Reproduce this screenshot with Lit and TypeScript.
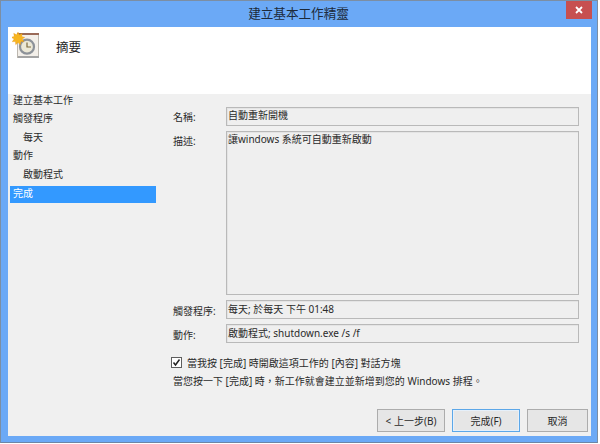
import { LitElement, html, css } from "lit";
import { customElement } from "lit/decorators.js";

@customElement("app-root")
export class AppRoot extends LitElement {
  static styles = css`
    :host {
      display: block;
      width: 600px;
      height: 444px;
      font-family: "Noto Sans", "Noto Sans CJK TC", sans-serif;
      font-size: 10px;
      color: #2a2a2a;
    }
    * { box-sizing: border-box; }
    .window {
      width: 598px;
      height: 443px;
      margin: 0 1px 1px 0;
      background: #6ba9f6;
      border: 1px solid #7c8ea3;
      border-bottom-color: #6c86a6;
      display: flex;
      flex-direction: column;
      padding: 0 6px 6px 7px;
    }
    .titlebar {
      height: 26px;
      flex: none;
      display: flex;
      align-items: flex-start;
      position: relative;
    }
    .title {
      flex: 1;
      text-align: center;
      font-size: 12.6px;
      line-height: 25px;
      color: #1c2a3a;
      padding-right: 2px;
    }
    .close {
      position: absolute;
      right: -1px;
      top: 0;
      width: 26px;
      height: 18px;
      background: #c75050;
      display: flex;
      align-items: center;
      justify-content: center;
    }
    .client {
      flex: 1;
      display: flex;
      flex-direction: column;
      background: #f0f0f0;
      min-height: 0;
    }
    .header {
      height: 67px;
      flex: none;
      background: #fff;
      display: flex;
      align-items: flex-start;
      padding: 5px 0 0 4px;
    }
    .header svg { flex: none; }
    .header h1 {
      margin: 7px 0 0 16px;
      font-size: 12.5px;
      line-height: 18px;
      font-weight: 400;
      color: #1e1e1e;
    }
    .body {
      flex: 1;
      display: flex;
      min-height: 0;
    }
    .nav {
      width: 146px;
      flex: none;
      margin-left: 2px;
      display: flex;
      flex-direction: column;
    }
    .nav div {
      height: 18.4px;
      line-height: 13px;
      padding-left: 3px;
    }
    .nav .sub { padding-left: 13px; }
    .nav .sel {
      background: #3399ff;
      color: #fff;
      height: 16.5px;
      margin-top: 0.5px;
      line-height: 14px;
    }
    .main {
      flex: 1;
      padding: 13px 12px 0 17px;
      display: flex;
      flex-direction: column;
      min-width: 0;
    }
    .form {
      display: grid;
      grid-template-columns: 53px 1fr;
      row-gap: 5px;
      grid-template-rows: 19px 164px 19px 19px;
    }
    .lbl { padding-top: 2px; line-height: 16px; }
    .lbl.mid { padding-top: 3px; }
    .field {
      border: 1px solid #b9b9b9;
      background: #efefef;
      padding: 0 4px 0 1px;
      line-height: 15px;
      white-space: nowrap;
      overflow: hidden;
      box-shadow: inset 1px 1px 0 #e4e4e4;
    }
    .field.low { padding-top: 1px; }
    .check {
      display: flex;
      align-items: center;
      gap: 5px;
      margin: 12px 0 0 -2px;
      height: 14px;
    }
    .box {
      width: 11px;
      height: 11px;
      border: 1px solid #5e5e5e;
      background: #fff;
      flex: none;
      display: flex;
    }
    .note { margin-top: 5px; line-height: 15px; }
    .footer {
      margin: auto -12px 0 0;
      display: flex;
      justify-content: flex-end;
      gap: 7px;
      padding: 0 3px 4px 0;
    }
    button {
      font: inherit;
      color: inherit;
      height: 23px;
      width: 68px;
      padding: 0;
      border: 1px solid #acacac;
      background: #e6e6e6;
      line-height: 14px;
    }
    button.primary { border: 1px solid #5ca7e8; box-shadow: inset 0 0 0 1px #e6f0fa; }
    button.cancel { width: 61px; }
  `;

  render() {
    return html`
      <div class="window">
        <div class="titlebar">
          <div class="title">建立基本工作精靈</div>
          <div class="close">
            <svg width="8" height="8" viewBox="0 0 8 8">
              <path d="M1 1l6 6M7 1l-6 6" stroke="#fff" stroke-width="1.8" fill="none" />
            </svg>
          </div>
        </div>
        <div class="client">
          <div class="header">
            <svg width="28" height="28" viewBox="0 0 28 28">
              <rect x="5.5" y="1.5" width="21" height="24" fill="#f3efe9" stroke="#bcb7af" />
              <rect x="5" y="1" width="22" height="2" fill="#9a6a58" />
              <rect x="6" y="24" width="21" height="2" fill="#a4a4a4" />
              <circle cx="15" cy="14.7" r="7" fill="#ece8d6" stroke="#8d9299" stroke-width="2.2" />
              <path d="M15 10.5v4.5h4" stroke="#7d6a3e" stroke-width="1.2" fill="none" />
              <path d="M6 0l1.3 2.8 2.9-1.4-.5 3.1 3.1.9-2.6 1.7 1.8 2.7-3.2-.2-.5 3.2-2.3-2.3-2.3 2.3-.3-3.3-3.2.2 1.9-2.6L-.8 5.3l3-.9-.5-3.1 2.9 1.5z" fill="#f7b51f" stroke="#e58b10" stroke-width=".3" />
            </svg>
            <h1>摘要</h1>
          </div>
          <div class="body">
            <div class="nav">
              <div>建立基本工作</div>
              <div>觸發程序</div>
              <div class="sub">每天</div>
              <div>動作</div>
              <div class="sub">啟動程式</div>
              <div class="sel">完成</div>
            </div>
            <div class="main">
              <div class="form">
                <div class="lbl">名稱:</div>
                <div class="field">自動重新開機</div>
                <div class="lbl">描述:</div>
                <div class="field">讓windows 系統可自動重新啟動</div>
                <div class="lbl mid">觸發程序:</div>
                <div class="field low">每天; 於每天 下午 01:48</div>
                <div class="lbl mid">動作:</div>
                <div class="field low">啟動程式; shutdown.exe /s /f</div>
              </div>
              <div class="check">
                <span class="box">
                  <svg width="9" height="9" viewBox="0 0 9 9">
                    <path d="M1.5 4.5l2 2.5 4-5.5" stroke="#222" stroke-width="1.5" fill="none" />
                  </svg>
                </span>
                <span>當我按 [完成] 時開啟這項工作的 [內容] 對話方塊</span>
              </div>
              <div class="note">當您按一下 [完成] 時，新工作就會建立並新增到您的 Windows 排程。</div>
              <div class="footer">
                <button>&lt; 上一步(B)</button>
                <button class="primary">完成(F)</button>
                <button class="cancel">取消</button>
              </div>
            </div>
          </div>
        </div>
      </div>
    `;
  }
}
